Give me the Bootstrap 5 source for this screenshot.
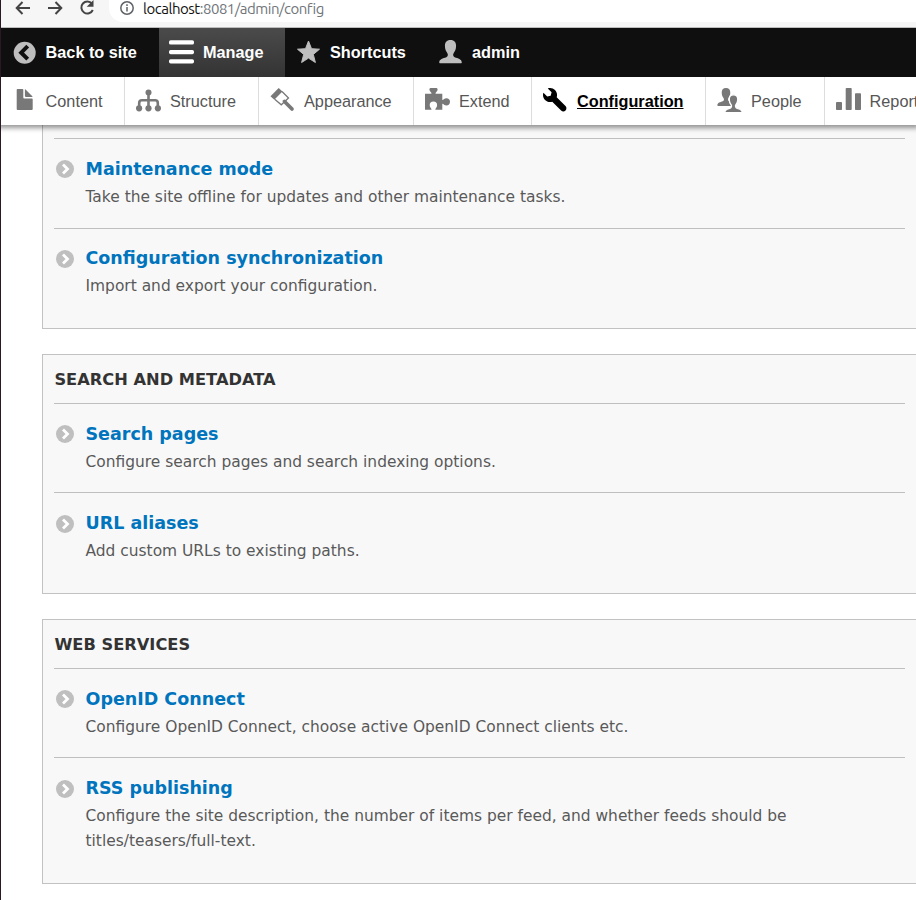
<!DOCTYPE html>
<html lang="en">
<head>
<meta charset="utf-8">
<title>Configuration</title>
<link href="https://cdn.jsdelivr.net/npm/bootstrap@5.3.0/dist/css/bootstrap.min.css" rel="stylesheet">
<style>
html,body{height:900px;overflow:hidden}
body{background:#fff;border-left:1px solid #2c1725;color:#595959;font-family:"DejaVu Sans",sans-serif}
svg{display:block;flex:none}
.browser{height:28px;background:#f6f6f6;border-bottom:1px solid #bdbdbd}
.browser .nav-icons{width:108px;flex:none;padding-left:13px;gap:14px}
.address{height:22px;border-radius:0 0 0 14px;padding:0 0 6px 10px;font:15px/17px Ubuntu,"Open Sans",sans-serif;color:#70757a;letter-spacing:-.48px;white-space:nowrap}
.address b{font-weight:400;color:#111}
.admin-bar{height:49px;background:#0f0f0f;font:bold 16.25px "Liberation Sans",sans-serif;color:#fff}
.admin-bar a,.tray a{color:inherit;gap:9px;flex:none;white-space:nowrap;text-decoration:none}
.admin-bar a{padding-left:11px}
.admin-bar svg{margin-bottom:1px}
.admin-bar .w1{width:158px;padding-left:10.6px}.admin-bar .w2{width:126px;padding-left:10px;background:linear-gradient(#4b4b4b,#333)}
.admin-bar .w3{width:142px}
.tray{height:48px;background:#fff;font:16.25px "Liberation Sans",sans-serif;color:#565656;box-shadow:0 0 5px 3px rgba(0,0,0,.42);clip-path:inset(0 0 -14px 0);z-index:2;position:relative}
.tray a{padding-left:11px;border-right:1px solid #ddd}
.tray a:first-child{padding-left:10.6px}
.tray svg{fill:#787878;margin-bottom:1px}
.tray .here{font-weight:bold;color:#000;text-decoration:underline}
.tray .here svg{fill:#000}
.tray a:last-child{border-right:0;padding-left:10.6px}
.c1{width:124px}.c2{width:134px}.c3{width:155px}.c4{width:118px}.c5{width:174px}.c6{width:119px}.c7{width:91px}
main{padding-left:41px}
.panel{background:#f8f8f8;border:1px solid #c2c2c2;border-right:0;padding:0 11px;margin-bottom:25px}
.panel h3{margin:0;height:48px;padding-left:.4px;font-size:16.25px;line-height:49px;font-weight:bold;color:#333;text-transform:uppercase}
.entry{border-top:1px solid #bfbfbf;height:89px;padding:17px 0 0 2px;gap:11.5px}
.entry svg{margin-top:4px}
.entry h4{margin:0;font-size:17.5px;line-height:26px;font-weight:bold}
.entry h4 a{color:#0074bd;text-decoration:none}
.entry p{margin:3px 0 0;font-size:15.44px;line-height:25px}
.entry:last-child{height:101px}
.entry:last-child svg{margin-top:5px}
.first-panel{border-top:0;padding-top:13px}
.first-panel .entry:first-child{height:90px}
.first-panel .entry:last-child{height:100px;padding-top:16px}
.panel .tall:last-child{height:126px}
</style>
<script src="https://cdn.jsdelivr.net/npm/bootstrap@5.3.0/dist/js/bootstrap.bundle.min.js"></script>
</head>
<body>
<svg width="0" height="0" class="position-absolute"><defs>
<symbol id="go" viewBox="0 0 18 18"><circle cx="9" cy="9" r="9" fill="#bfbfbf"/><path d="M7 4.500 11.500 9 7 13.500" fill="none" stroke="#fff" stroke-width="2.800"/></symbol>
<symbol id="person" viewBox="0 0 24 24"><path d="M12 0c4 0 5.800 2.600 5.700 6.200-.1 3.400-1 5.300-2.400 7.100-1.100 1.600-.6 3.700 1 4.400 3.300 1.300 7.200 1.800 7.200 5.300 0 .6-.4 1-1 1h-21c-.6 0-1-.4-1-1 0-3.500 3.900-4 7.200-5.300 1.600-.7 2.100-2.800 1-4.400C7.300 11.500 6.400 9.600 6.300 6.200 6.200 2.600 8 0 12 0z"/></symbol>
</defs></svg>
<header class="browser d-flex align-items-start">
<div class="nav-icons d-flex">
<svg width="18" height="18" viewBox="0 0 18 18" fill="none" stroke="#444" stroke-width="2"><path d="M16 8H3M8.500 2 2.700 8l5.800 6"/></svg>
<svg width="18" height="18" viewBox="0 0 18 18" fill="none" stroke="#444" stroke-width="2"><path d="M2 8h13M9.500 2l5.800 6-5.800 6"/></svg>
<svg width="18" height="18" viewBox="0 0 18 18" fill="none" stroke="#444" stroke-width="2"><path d="M14 3.700A6 6 0 1 0 14.800 10"/><path d="M15.500 0v6.800H8.700z" fill="#444" stroke="none"/></svg>
</div>
<div class="address bg-white flex-grow-1 d-flex align-items-center gap-2">
<svg width="16" height="16" viewBox="0 0 16 16" fill="none" stroke="#5f6368" stroke-width="1.500"><circle cx="8" cy="8" r="6.200"/><path d="M8 7v4.500M8 4.200v1.700"/></svg>
<span><b>localhost</b>:8081/admin/config</span>
</div>
</header>
<nav class="admin-bar d-flex">
<a href="#" class="w1 d-flex align-items-center"><svg width="25" height="25" viewBox="0 0 25 25"><circle cx="12.700" cy="12.700" r="11" fill="#bebebe"/><path d="M15.700 6.200 9.200 12.700l6.500 6.500" fill="none" stroke="#0f0f0f" stroke-width="4"/></svg>Back to site</a>
<a href="#" class="w2 d-flex align-items-center"><svg width="25" height="25" viewBox="0 0 25 25" fill="#fff"><rect y="0.300" width="25" height="4.300" rx="1.700"/><rect y="9.900" width="25" height="4.300" rx="1.700"/><rect y="19.200" width="25" height="4.300" rx="1.700"/></svg>Manage</a>
<a href="#" class="w3 d-flex align-items-center"><svg width="25" height="25" viewBox="0 0 25 25"><path d="M12.500 1l3 7.700 8 .5-6.200 5.200 2.100 8.100-6.900-4.400-6.900 4.400 2.100-8.100L1.500 9.200l8-.5z" fill="#bebebe" stroke="#bebebe" stroke-width="1" stroke-linejoin="round"/></svg>Shortcuts</a>
<a href="#" class="d-flex align-items-center"><svg width="25" height="23.500" fill="#bebebe"><use href="#person"/></svg>admin</a>
</nav>
<nav class="tray d-flex">
<a href="#" class="c1 d-flex align-items-center"><svg width="25" height="25" viewBox="0 0 25 25"><path d="M5.500 1h5c.5 0 .8.300.8.800v7.700c0 .6.300.9.900.9h7.700c.5 0 .8.300.8.800v9.600c0 .8-.3 1.200-.8 1.200H5.500c-.5 0-.8-.4-.8-.9V1.800c0-.5.300-.8.800-.8zM12.900 1.800c0-.5.300-.6.600-.3l6.800 6.700c.3.300.2.700-.3.700h-6.300c-.5 0-.8-.3-.8-.8z"/></svg>Content</a>
<a href="#" class="c2 d-flex align-items-center"><svg width="25" height="25" viewBox="0 0 25 25"><circle cx="12.500" cy="4.500" r="3"/><circle cx="3.100" cy="20.300" r="3.100"/><circle cx="12.500" cy="20.300" r="3.100"/><circle cx="21.900" cy="20.300" r="3.100"/><path d="M12.500 5v15M3.200 20v-5q0-2.700 2.700-2.700h13.200q2.700 0 2.700 2.700v5" fill="none" stroke="#787878" stroke-width="2.600"/></svg>Structure</a>
<a href="#" class="c3 d-flex align-items-center"><svg width="25" height="25" viewBox="0 0 25 25"><path d="M8.700 0 .5 8.200l3.800 3.500L12.400 3.500z"/><path d="M12 3.500l6.500 6.600-7.200 6.700-6.600-5.600" fill="none" stroke="#787878" stroke-width="1.300"/><path d="M14.500 13.500l7.500 7.500" stroke="#787878" stroke-width="3.700" stroke-linecap="round"/></svg>Appearance</a>
<a href="#" class="c4 d-flex align-items-center"><svg width="25" height="25" viewBox="0 0 25 25"><path d="M0 5.700h6.500C6.500 4 4.400 3.500 4.400 1.500 4.400.5 5 0 6 0h5c1 0 1.600.5 1.600 1.500 0 2-2.100 2.500-2.100 4.200h6.800v6.200c1.500 0 2-1.700 4.200-1.700 2 0 3.500 1.400 3.500 3.600s-1.500 3.700-3.500 3.700c-2.200 0-2.700-1.800-4.200-1.800v6H10.300c0-1.500 1.800-2.200 1.800-4.500a3.700 3.700 0 0 0-7.400 0c0 2.300 1.900 3 1.900 4.500H0z"/></svg>Extend</a>
<a href="#" class="c5 here d-flex align-items-center"><svg width="25" height="25" viewBox="0 0 16 16"><path d="M14.416 11.586l-.01-.008v-.001l-5.656-5.656c.15-.449.252-.921.252-1.421 0-2.485-2.016-4.500-4.502-4.500-.505 0-.981.102-1.434.255l2.431 2.431-.588 2.196-2.196.588-2.445-2.445c-.162.464-.268.956-.268 1.475 0 2.486 2.014 4.500 4.500 4.500.5 0 .972-.102 1.421-.251l5.667 5.665c.781.781 2.047.781 2.828 0s.781-2.047 0-2.828z"/></svg>Configuration</a>
<a href="#" class="c6 d-flex align-items-center"><svg width="25" height="25" viewBox="0 0 25 25"><use href="#person" x="0" y="0" width="18" height="18"/><g stroke="#fff" stroke-width="1.800"><use href="#person" x="7.500" y="6.500" width="18" height="18.500"/></g></svg>People</a>
<a href="#" class="c7 d-flex align-items-center"><svg width="25" height="25" viewBox="0 0 25 25"><rect y="14" width="6" height="8" rx=".8"/><rect x="9.700" y="0" width="6" height="22" rx=".8"/><rect x="19" y="5.300" width="6" height="16.700" rx=".8"/></svg><span>Reports</span></a>
</nav>
<main>
<section class="panel first-panel">
<div class="entry d-flex"><svg width="18" height="18"><use href="#go"/></svg><div><h4><a href="#">Maintenance mode</a></h4><p>Take the site offline for updates and other maintenance tasks.</p></div></div>
<div class="entry d-flex"><svg width="18" height="18"><use href="#go"/></svg><div><h4><a href="#">Configuration synchronization</a></h4><p>Import and export your configuration.</p></div></div>
</section>
<section class="panel">
<h3>Search and metadata</h3>
<div class="entry d-flex"><svg width="18" height="18"><use href="#go"/></svg><div><h4><a href="#">Search pages</a></h4><p>Configure search pages and search indexing options.</p></div></div>
<div class="entry d-flex"><svg width="18" height="18"><use href="#go"/></svg><div><h4><a href="#">URL aliases</a></h4><p>Add custom URLs to existing paths.</p></div></div>
</section>
<section class="panel">
<h3>Web services</h3>
<div class="entry d-flex"><svg width="18" height="18"><use href="#go"/></svg><div><h4><a href="#">OpenID Connect</a></h4><p>Configure OpenID Connect, choose active OpenID Connect clients etc.</p></div></div>
<div class="entry tall d-flex"><svg width="18" height="18"><use href="#go"/></svg><div><h4><a href="#">RSS publishing</a></h4><p>Configure the site description, the number of items per feed, and whether feeds should be<br>titles/teasers/full-text.</p></div></div>
</section>
</main>
</body>
</html>
